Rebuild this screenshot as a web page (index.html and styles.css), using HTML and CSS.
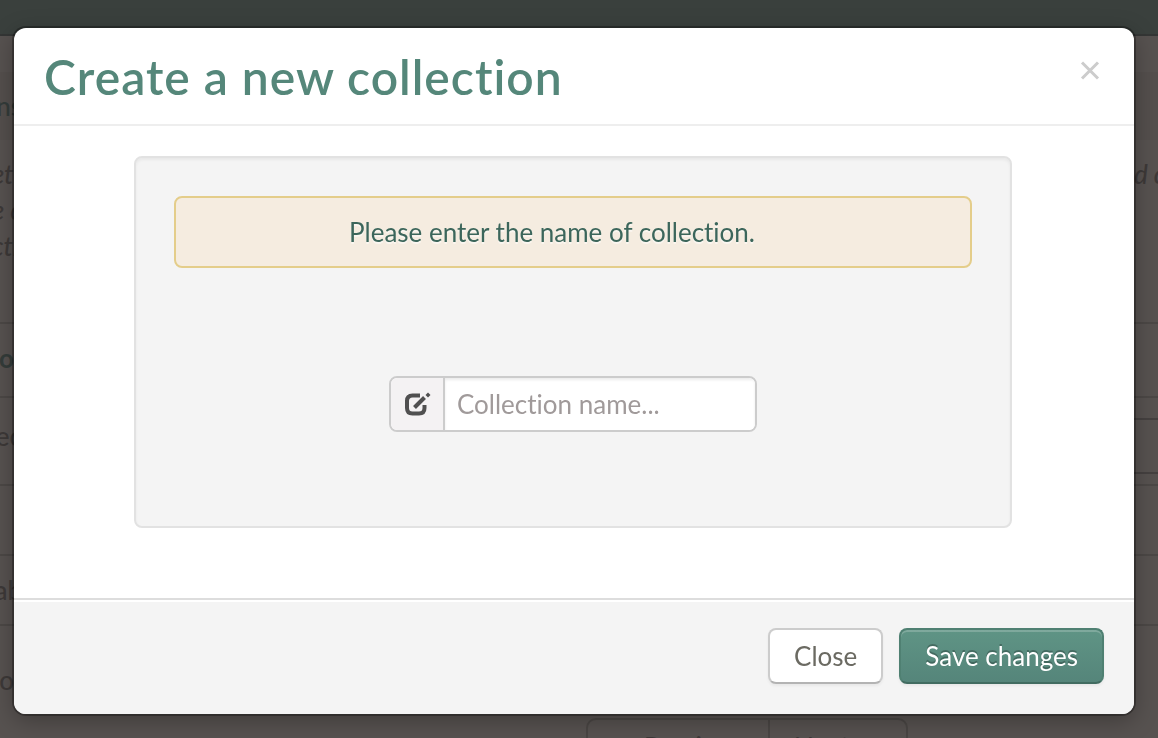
FILE: index.html
```html
<!DOCTYPE html>
<html lang="en">
<head>
<meta charset="utf-8">
<meta name="viewport" content="width=device-width, initial-scale=1">
<title>Create a new collection</title>
<link rel="stylesheet" href="styles.css">
</head>
<body>
<div class="page" aria-hidden="true">
  <div class="topbar"></div>
  <div class="heading"><span class="edge">ns</span></div>
  <div class="intro">
    <div class="edge">et<br>e c<br>cti</div>
    <div class="intro-right">d c</div>
  </div>
  <div class="row row-head"><span class="edge edge-narrow">o</span></div>
  <div class="row row-filter"><span class="edge">ec</span><span class="filter-box"></span></div>
  <div class="row"></div>
  <div class="row row-label"><span class="edge">ab</span></div>
  <div class="row row-last"><span class="edge edge-narrow">o</span></div>
  <div class="pager"><span class="pager-item">Previous</span><span class="pager-item">Next</span></div>
</div>

<div class="overlay">
  <form class="modal" role="dialog" aria-modal="true" aria-labelledby="modal-title">
    <header class="modal-header">
      <h1 class="modal-title" id="modal-title">Create a new collection</h1>
      <button class="dismiss" type="button" aria-label="Dismiss">
        <svg width="20" height="20" viewBox="0 0 20 20" aria-hidden="true"><path d="M2 2.500 18 18.500M18 2.500 2 18.500" fill="none" stroke="currentColor" stroke-width="3"/></svg>
      </button>
    </header>
    <div class="modal-body">
      <div class="well">
        <p class="alert">Please enter the name of collection.</p>
        <div class="field">
          <label class="addon" for="collection-name" aria-label="Collection name">
            <svg width="28" height="28" viewBox="0 0 28 28" aria-hidden="true">
              <path d="M17 5.500H9.500Q4 5.500 4 11V18Q4 23.500 9.500 23.500H16Q21.500 23.500 21.500 18V15" fill="none" stroke="currentColor" stroke-width="4"/>
              <path d="M11.500 17.500 21.500 7.500" fill="none" stroke="currentColor" stroke-width="4"/>
              <path d="M22.500 5 25 2.500 27.500 5 25 7.500Z" fill="currentColor"/>
            </svg>
          </label>
          <input class="name-input" id="collection-name" type="text" placeholder="Collection name...">
        </div>
      </div>
    </div>
    <footer class="modal-footer">
      <button class="btn" type="button">Close</button>
      <button class="btn btn-primary" type="submit">Save changes</button>
    </footer>
  </form>
</div>
</body>
</html>
```

FILE: styles.css
```css
* {
  box-sizing: border-box;
}

body {
  margin: 0;
  background: #575250;
  color: #3d3938;
  font: 26px/36px Lato, sans-serif;
  font-variant-ligatures: none;
}

/* Dimmed page behind the dialog */
.page {
  height: 100vh;
  overflow: hidden;
  font-weight: 500;
}

.topbar {
  height: 36px;
  background: #3a403d;
  border-bottom: 2px solid #343635;
}

.heading {
  display: flex;
  margin-top: 36px;
  height: 68px;
  padding-top: 16px;
  background: #544f4d;
  color: #343c3a;
}

/* Text that runs in from beyond the left side of the window */
.edge {
  display: flex;
  justify-content: flex-end;
  width: 22px;
  white-space: nowrap;
}

.edge-narrow {
  width: 14px;
}

.intro {
  display: flex;
  justify-content: space-between;
  height: 182px;
  padding-top: 16px;
  font-style: italic;
}

.intro-right {
  width: 24px;
  white-space: nowrap;
}

.row {
  display: flex;
  justify-content: space-between;
  height: 70px;
  border-top: 2px solid #4c4846;
}

.row-head {
  height: 74px;
  padding-top: 16px;
  color: #343c3a;
  font-weight: 700;
}

.row-filter {
  height: 88px;
  padding-top: 20px;
}

.filter-box {
  width: 200px;
  height: 56px;
  border: 2px solid #454140;
  border-right: 0;
}

.row-label {
  padding-top: 16px;
}

.row-last {
  height: 94px;
  padding-top: 36px;
}

.pager {
  display: flex;
  width: 322px;
  margin-left: 586px;
  border: 2px solid #4a4644;
  border-radius: 10px;
}

.pager-item {
  flex: 1;
  padding: 8px 24px;
}

.pager-item:first-child {
  flex: 0 0 182px;
  padding-left: 56px;
  border-right: 2px solid #4a4644;
}

/* Dialog */
.overlay {
  position: fixed;
  inset: 0;
  display: flex;
  align-items: flex-start;
  padding: 28px 24px 24px 14px;
}

.modal {
  flex: 1;
  overflow: hidden;
  background: #fff;
  border-radius: 12px;
  box-shadow: 0 0 0 2px rgba(0, 0, 0, 0.3), 0 6px 24px rgba(0, 0, 0, 0.3);
}

.modal-header {
  display: flex;
  align-items: flex-start;
  justify-content: space-between;
  padding: 18px 30px 16px;
  border-bottom: 2px solid #eee;
}

.modal-title {
  margin: 0;
  color: #55877a;
  font-size: 48px;
  line-height: 62px;
  font-weight: 600;
  letter-spacing: 1px;
}

.dismiss {
  display: flex;
  margin: 14px 4px 0 0;
  padding: 0;
  border: 0;
  background: none;
  color: #ccc;
}

.modal-body {
  padding: 30px 122px 70px 120px;
}

.well {
  height: 372px;
  padding: 38px;
  background: #f4f4f4;
  border: 2px solid #e2e2e2;
  border-radius: 8px;
  box-shadow: inset 0 2px 3px rgba(0, 0, 0, 0.05);
}

.alert {
  margin: 0;
  padding: 16px 70px 16px 28px;
  background: #f5ece0;
  border: 2px solid #e4cd8a;
  border-radius: 8px;
  color: #3c665b;
  text-align: center;
  text-shadow: 0 2px 0 rgba(255, 255, 255, 0.5);
}

.field {
  display: flex;
  width: 368px;
  height: 56px;
  margin: 108px auto 0;
  overflow: hidden;
  background: #fff;
  border: 2px solid #ccc;
  border-radius: 8px;
}

.addon {
  display: flex;
  align-items: center;
  justify-content: center;
  width: 54px;
  background: #f4f2f3;
  border-right: 2px solid #ccc;
  color: #505050;
}

.name-input {
  flex: 1;
  min-width: 0;
  padding: 0 12px;
  border: 0;
  outline: 0;
  background: #fff;
  box-shadow: inset 0 2px 3px rgba(0, 0, 0, 0.08);
  color: #555;
  font: inherit;
  font-variant-ligatures: none;
}

.name-input::placeholder {
  color: #a09a9a;
  opacity: 1;
}

.modal-footer {
  display: flex;
  justify-content: flex-end;
  gap: 16px;
  padding: 28px 30px 30px;
  background: #f4f4f4;
  border-top: 2px solid #ddd;
  box-shadow: inset 0 2px 0 #fff;
}

.btn {
  height: 56px;
  padding: 0 24px;
  background: #fff;
  border: 2px solid #ccc;
  border-bottom-color: #b3b3b3;
  border-radius: 8px;
  box-shadow: 0 2px 3px rgba(0, 0, 0, 0.05);
  color: #6b6a62;
  font: inherit;
}

.btn-primary {
  background: linear-gradient(#5f9485, #55857a);
  border-color: #4f8072;
  border-bottom-color: #426c61;
  box-shadow: inset 0 2px 0 rgba(255, 255, 255, 0.2), 0 2px 3px rgba(0, 0, 0, 0.05);
  color: #fff;
  text-shadow: 0 -2px 0 rgba(0, 0, 0, 0.25);
}
```
